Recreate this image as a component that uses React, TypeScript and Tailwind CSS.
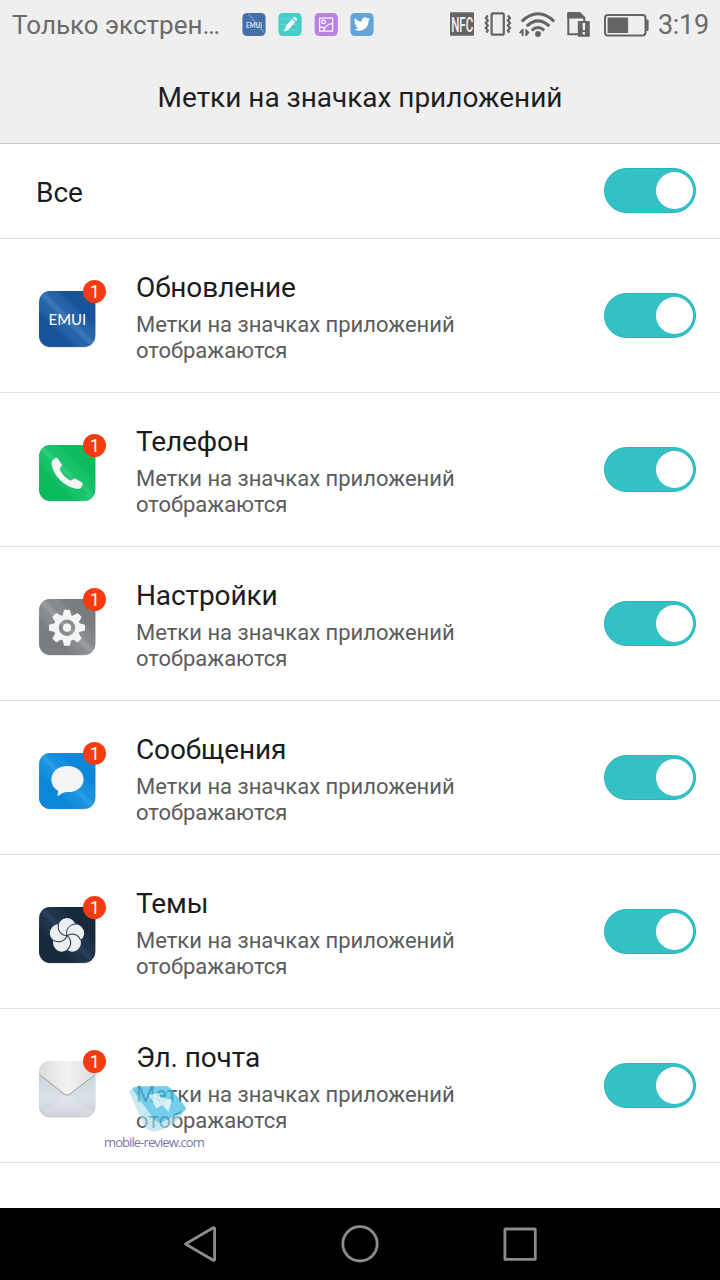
import type { ReactNode } from 'react';

interface AppItem {
  name: string;
  icon: ReactNode;
}

// Brushed metal tile shared by the launcher icons
function Tile({ id, base, shine, children }: { id: string; base: string; shine: string; children: ReactNode }) {
  return (
    <svg width="90" height="90" viewBox="0 0 90 90">
      <defs>
        <linearGradient id={id} x1="0" y1="1" x2="1" y2="0">
          <stop offset="0.3" stopColor={base} />
          <stop offset="0.44" stopColor={shine} stopOpacity="0.4" />
          <stop offset="0.5" stopColor={shine} />
          <stop offset="0.56" stopColor={shine} stopOpacity="0.4" />
          <stop offset="0.7" stopColor={base} />
        </linearGradient>
      </defs>
      <rect x="8.9" y="21.4" width="56.6" height="56.2" rx="11.5" fill="#000" opacity="0.18" />
      <rect x="9.2" y="21" width="56" height="55.8" rx="11" fill={base} />
      <rect x="9.2" y="21" width="56" height="55.8" rx="11" fill={`url(#${id})`} />
      {children}
    </svg>
  );
}

function Gear() {
  return (
    <g transform="translate(37 49.7)" fill="#f3f4f4">
      {[0, 45, 90, 135, 180, 225, 270, 315].map((angle) => (
        <path key={angle} transform={`rotate(${angle})`} d="M-4.4-12L-3.1-17.2Q-2.9-18-2.2-18H2.2Q2.9-18 3.1-17.2L4.4-12Z" />
      ))}
      <path
        fillRule="evenodd"
        d="M-13.2 0A13.2 13.2 0 1 1 13.2 0A13.2 13.2 0 1 1-13.2 0ZM-8.2 0A8.2 8.2 0 1 0 8.2 0A8.2 8.2 0 1 0-8.2 0Z"
      />
      <circle r="4.1" />
    </g>
  );
}

function Flower() {
  const petals = [0, 72, 144, 216, 288];
  return (
    <g transform="translate(37 49.7)">
      {petals.map((angle) => (
        <circle key={angle} transform={`rotate(${angle})`} cx="0" cy="-8.8" r="8.8" fill="#eceff1" />
      ))}
      {petals.map((angle) => (
        <path
          key={angle}
          transform={`rotate(${angle})`}
          d="M0 0A8.8 8.8 0 0 1 8.37-11.52"
          fill="none"
          stroke="#1c2c3e"
          strokeWidth="1"
        />
      ))}
    </g>
  );
}

function Mail() {
  return (
    <svg width="90" height="90" viewBox="0 0 90 90">
      <defs>
        <linearGradient id="mailBody" x1="0" y1="0" x2="0" y2="1">
          <stop offset="0.3" stopColor="#ccd5de" />
          <stop offset="0.65" stopColor="#dbe1e8" />
          <stop offset="1" stopColor="#c6ccd3" />
        </linearGradient>
        <linearGradient id="mailFlap" x1="0" y1="0" x2="1" y2="0">
          <stop offset="0" stopColor="#dcdcdd" />
          <stop offset="0.5" stopColor="#f3f3f3" />
          <stop offset="1" stopColor="#dcdcdc" />
        </linearGradient>
        <clipPath id="mailClip">
          <rect x="9.2" y="21" width="56" height="55.8" rx="11" />
        </clipPath>
      </defs>
      <rect x="9" y="21.4" width="56.4" height="56" rx="11" fill="#9da3aa" opacity="0.6" />
      <g clipPath="url(#mailClip)">
        <rect x="9" y="20" width="57" height="58" fill="url(#mailBody)" />
        <path d="M37 55L9 74V78H66V74Z" fill="#fff" opacity="0.16" />
        <path d="M9 20H66V34L40 54Q37 56.6 34 54L9 34Z" fill="url(#mailFlap)" />
        <path d="M9 34L34 54Q37 56.6 40 54L66 34" fill="none" stroke="#9b9fa4" strokeWidth="1" />
      </g>
    </svg>
  );
}

const apps: AppItem[] = [
  {
    name: 'Обновление',
    icon: (
      <Tile id="emui" base="#17529b" shine="#3b7bb9">
        <text x="18.6" y="54.6" fill="#fff" fontFamily="Lato, sans-serif" fontSize="15.8" textLength="37.5" lengthAdjust="spacingAndGlyphs">
          EMUI
        </text>
        <path d="M31.5 54.4L38.6 46.5" stroke="#fff" strokeWidth="1" />
      </Tile>
    ),
  },
  {
    name: 'Телефон',
    icon: (
      <Tile id="phone" base="#0aba5d" shine="#2fce7d">
        <path d="M41 50L60 72L49 66Z" fill="#098f49" opacity="0.25" />
        <path
          d="M22.4 36.4L25.3 34Q26.4 33.2 27.5 34.2L31.6 40.3Q32.2 41.5 31.3 42.4L30.2 43.8Q29.5 44.8 30.1 46Q33.2 52.6 39.8 56.2Q41 56.8 42 56L44 54.8Q45 54.2 46 54.9L52 58.6Q53 59.3 52.6 60.4L51.1 63.4Q50.5 64.5 49.2 64.7C36 64.6 22 51.2 21.6 38.4Q21.5 37.2 22.4 36.4Z"
          fill="#f4f5f5"
        />
      </Tile>
    ),
  },
  {
    name: 'Настройки',
    icon: (
      <Tile id="settings" base="#787d81" shine="#9b9fa2">
        <Gear />
      </Tile>
    ),
  },
  {
    name: 'Сообщения',
    icon: (
      <Tile id="messages" base="#0b86d9" shine="#2c9fe6">
        <path
          d="M37.5 34C46.8 34 53.6 39.5 53.6 47.2C53.6 54.8 46.8 60.1 38 60.1C35.7 60.1 34 60.4 32 61.6Q29.6 63.3 27.2 64.3Q28 62.2 28.2 58.8C24 56.4 21.4 52.5 21.4 47.2C21.4 39.5 28.2 34 37.5 34Z"
          fill="#f2f4f5"
        />
      </Tile>
    ),
  },
  {
    name: 'Темы',
    icon: (
      <Tile id="themes" base="#17293c" shine="#29425c">
        <Flower />
      </Tile>
    ),
  },
  { name: 'Эл. почта', icon: <Mail /> },
];

function Toggle() {
  return (
    <div className="flex h-[45px] w-[92px] shrink-0 items-center justify-end rounded-full border border-[#1fb8bd] bg-[#35c0c6] pr-[2.5px]">
      <div className="size-[36.5px] rounded-full bg-white" />
    </div>
  );
}

function AppRow({ app }: { app: AppItem }) {
  return (
    <div className="flex h-[154px] items-start border-b border-[#dfdfdf] pr-6 pl-[30px]">
      <div className="relative mt-[31px] size-[90px] shrink-0">
        {app.icon}
        <span className="absolute top-[10.4px] left-[53.4px] flex size-[23px] items-center justify-center rounded-full bg-[#f53b12] text-[18px] leading-none text-white">
          1
        </span>
      </div>
      <div className="ml-4 flex-1 pt-[32px]">
        <h2 className="text-[28px] leading-[33px] tracking-[-0.1px] text-[#1b1b1b]">{app.name}</h2>
        <p className="mt-2 w-[360px] text-[22px] leading-[26px] text-[#5c5c5c]">
          Метки на значках приложений отображаются
        </p>
      </div>
      <div className="mt-[54px]">
        <Toggle />
      </div>
    </div>
  );
}

function NotificationIcons() {
  return (
    <svg width="134" height="26" viewBox="241 11.5 134 26">
      {/* EMUI */}
      <rect x="242.4" y="12.5" width="23.2" height="23" rx="4.5" fill="#456fa9" />
      <path d="M248 13L265 33" stroke="#6f9bc9" strokeWidth="1.2" />
      <text x="246" y="27" fill="#fff" fontFamily="Lato, sans-serif" fontSize="7.5" textLength="16" lengthAdjust="spacingAndGlyphs">
        EMUI
      </text>
      {/* Notes */}
      <rect x="278.4" y="12.5" width="23.2" height="23" rx="4.5" fill="#45cdc7" />
      <path d="M281 18.5H292M281 24H297M281 29.5H298" stroke="#79dcd7" strokeWidth="0.8" />
      <path d="M284.2 31.5L285.8 25.8L291.9 18.6L295.2 21.4L289.2 28.6ZM292.8 17.6L293.7 16.7Q294.4 16.2 295.2 16.8L296.7 18.1Q297.4 18.8 296.8 19.5L296.1 20.4Z" fill="#fff" />
      {/* Gallery */}
      <rect x="314.6" y="12.5" width="23.2" height="23" rx="4.5" fill="#b981e6" />
      <g fill="none" stroke="#fff" strokeWidth="1.2">
        <rect x="319.6" y="17.6" width="13" height="13" />
        <circle cx="323.6" cy="21.4" r="1.8" />
        <path d="M323.3 30.5C324.4 26.8 327.6 23.6 332.6 23M319.6 26.8Q322.8 26.2 324.6 27.6" />
      </g>
      {/* Twitter */}
      <rect x="350.4" y="12.5" width="23.2" height="23" rx="4.5" fill="#61a4da" />
      <path
        transform="translate(354 15.2) scale(0.68)"
        d="M23.6 4.9c-.9.4-1.8.7-2.8.8 1-.6 1.8-1.6 2.2-2.7-1 .6-2 1-3.1 1.2A4.9 4.9 0 0 0 11.5 8.7C7.4 8.5 3.9 6.5 1.4 3.6A4.9 4.9 0 0 0 2.9 10.2c-.8 0-1.6-.2-2.2-.6v.1c0 2.4 1.7 4.4 3.9 4.8-.7.2-1.5.2-2.2.1.6 2 2.4 3.4 4.6 3.4A9.9 9.9 0 0 1-.1 20a13.9 13.9 0 0 0 7.6 2.2c9.1 0 14.3-7.7 13.9-14.6 1-.7 1.8-1.6 2.2-2.7z"
        fill="#fff"
      />
    </svg>
  );
}

function SystemIcons() {
  return (
    <svg width="200" height="28" viewBox="449 11 200 28">
      {/* NFC */}
      <rect x="450" y="12.3" width="24" height="23.5" rx="1" fill="#646464" />
      <text x="451.2" y="31.5" fill="#f3f3f3" fontFamily="Roboto, sans-serif" fontWeight="500" fontSize="21" textLength="22" lengthAdjust="spacingAndGlyphs">
        NFC
      </text>
      {/* Vibration */}
      <g fill="none" stroke="#646464" strokeWidth="2.2">
        <rect x="491.6" y="13.3" width="12.2" height="21.4" rx="1.5" />
        <path d="M487.8 15.5L485.8 18L487.8 20.5L485.8 23L487.8 25.5L485.8 28L487.8 30.5L486.4 32.6" />
        <path d="M507.8 15.5L510 18L507.8 20.5L510 23L507.8 25.5L510 28L507.8 30.5L509.4 32.6" />
      </g>
      {/* Wi-Fi */}
      <g fill="none" stroke="#646464" strokeWidth="3">
        <path d="M521.8 21.3Q538 6.3 554.2 21.3" />
        <path d="M526.8 26.2Q538 15.5 549.4 26.2" />
        <path d="M531.8 30.4Q538 24.6 544.2 30.4" />
      </g>
      <circle cx="538" cy="34" r="2.9" fill="#646464" />
      <path d="M523.6 29V36H521.8V33.5L518.8 32.7L522 29ZM525.3 29V36H526.7L529.5 32.5L526.7 29.5Z" fill="#646464" />
      {/* SIM alert */}
      <path d="M568.3 15H580L584.3 18.8V24M578 34.3H568.3V13" fill="none" stroke="#646464" strokeWidth="2" />
      <path d="M567.3 13Q567.3 12 568.3 12H580L585.3 17.2V18.6H567.3Z" fill="#646464" />
      <rect x="577.8" y="21" width="12" height="15.7" rx="0.8" fill="#646464" />
      <path d="M582.5 23H585.2L584.9 30.3H582.8ZM582.7 32H585V34.4H582.7Z" fill="#efefef" />
      {/* Battery */}
      <rect x="605" y="15" width="40.5" height="20.5" rx="3" fill="none" stroke="#646464" strokeWidth="2" />
      <rect x="607.6" y="17.5" width="20.5" height="15.5" fill="#646464" />
      <path d="M646 19.5H647.4Q648.6 19.5 648.6 21V29.5Q648.6 31 647.4 31H646Z" fill="#646464" />
    </svg>
  );
}

function StatusBar() {
  return (
    <div className="flex h-[50px] items-center pr-3 pl-3 text-[#6b6b6b]">
      <span className="w-[229px] text-[26px] leading-[50px] whitespace-nowrap">Только экстрен…</span>
      <NotificationIcons />
      <div className="ml-auto flex items-center">
        <SystemIcons />
        <span className="ml-[9px] w-[50px] text-[27px] leading-[50px] tracking-[-0.3px] whitespace-nowrap">3:19</span>
      </div>
    </div>
  );
}

function Watermark() {
  return (
    <div className="absolute top-[1080px] left-[100px]">
      <svg width="110" height="58" viewBox="100 1080 110 58">
        <path d="M129 1092Q130 1089 134 1087L154 1119Q158 1124 163 1122L184 1112Q178 1124 159 1131Q148 1134 143 1123Z" fill="#a8ddec" opacity="0.65" />
        <path d="M137 1086.5L166 1086Q170 1086.5 172 1090L185.5 1107Q187 1110 183 1112L163 1122Q158 1124 154 1119L133 1090Q132.5 1087 137 1086.5Z" fill="#3fbce5" opacity="0.72" />
        <path d="M149 1095L158.5 1093L161 1098L172 1099.5L168.5 1112L162.5 1105L156 1108.5L153 1102Z" fill="#fff" opacity="0.7" />
      </svg>
      <div className="-mt-[6px] ml-1 w-[102px] font-['Open_Sans',sans-serif] text-[13px] leading-[20px] tracking-[-0.9px] whitespace-nowrap text-[#7679a6]">
        mobile-review.com
      </div>
    </div>
  );
}

function NavBar() {
  return (
    <nav className="flex h-[72px] items-center justify-center bg-black">
      <svg width="360" height="72" viewBox="180 1208 360 72" fill="none" stroke="#8c8c8c" strokeWidth="2.8" strokeLinejoin="round">
        <path d="M185.5 1244L213.2 1227.8Q214.6 1227.2 214.6 1228.6V1259.4Q214.6 1260.8 213.2 1260.2Z" />
        <circle cx="360" cy="1243.8" r="17.2" />
        <rect x="504.9" y="1229" width="30.4" height="30.4" rx="0.5" />
      </svg>
    </nav>
  );
}

export default function App() {
  return (
    <div className="relative flex h-[1280px] w-[720px] flex-col overflow-hidden bg-white font-[Roboto,sans-serif]">
      <header className="h-[144px] border-b border-[#cccccc] bg-[#efefef]">
        <StatusBar />
        <h1 className="mt-[31px] text-center text-[28px] leading-[34px] tracking-[-0.03px] text-[#1f1f1f]">Метки на значках приложений</h1>
      </header>
      <main className="flex-1">
        <div className="flex h-[95px] items-start justify-between border-b border-[#dfdfdf] pt-6 pr-6 pl-9">
          <span className="mt-2 text-[28px] leading-[33px] text-[#1b1b1b]">Все</span>
          <Toggle />
        </div>
        {apps.map((app) => (
          <AppRow key={app.name} app={app} />
        ))}
      </main>
      <NavBar />
      <Watermark />
    </div>
  );
}
